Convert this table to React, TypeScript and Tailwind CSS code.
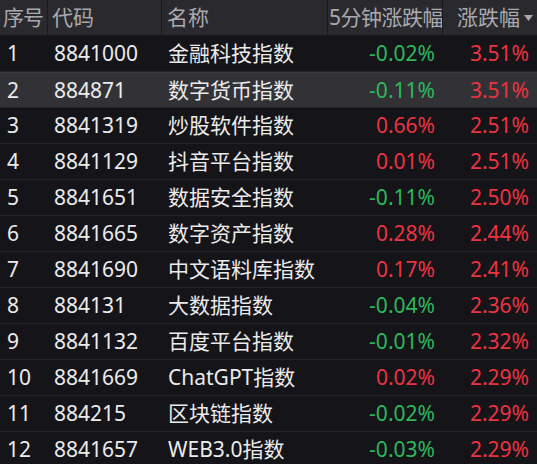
const rows = [
  ["1", "8841000", "金融科技指数", "-0.02%", "3.51%"],
  ["2", "884871", "数字货币指数", "-0.11%", "3.51%"],
  ["3", "8841319", "炒股软件指数", "0.66%", "2.51%"],
  ["4", "8841129", "抖音平台指数", "0.01%", "2.51%"],
  ["5", "8841651", "数据安全指数", "-0.11%", "2.50%"],
  ["6", "8841665", "数字资产指数", "0.28%", "2.44%"],
  ["7", "8841690", "中文语料库指数", "0.17%", "2.41%"],
  ["8", "884131", "大数据指数", "-0.04%", "2.36%"],
  ["9", "8841132", "百度平台指数", "-0.01%", "2.32%"],
  ["10", "8841669", "ChatGPT指数", "0.02%", "2.29%"],
  ["11", "884215", "区块链指数", "-0.02%", "2.29%"],
  ["12", "8841657", "WEB3.0指数", "-0.03%", "2.29%"],
];

export default function App() {
  return (
    <div
      className="w-[537px] h-[464px] overflow-hidden bg-[#141419] text-[21px] leading-none whitespace-nowrap"
      style={{ fontFamily: '"Noto Sans", "Noto Sans CJK SC", sans-serif' }}
    >
      {/* Header */}
      <div className="flex h-[36px] bg-[#2a2a2e] text-[#a9a9ad] border-b border-[#1a1a1e]">
        <div className="w-[48px] flex items-center pl-[3px] border-r border-[#1a1a1e] tracking-[-1px] overflow-hidden">序号</div>
        <div className="w-[114px] flex items-center pl-[4px] border-r border-[#1a1a1e]">代码</div>
        <div className="w-[166px] flex items-center pl-[5px] border-r border-[#1a1a1e]">名称</div>
        <div className="w-[115px] flex items-center pl-[1px] border-r border-[#1a1a1e] tracking-[-0.5px] overflow-hidden">5分钟涨跌幅</div>
        <div className="flex-1 flex items-center justify-end pr-[4px] gap-[4px]">
          涨跌幅
          <svg width="9" height="6" viewBox="0 0 9 6">
            <path d="M0 0 L9 0 L4.5 6 Z" fill="#a9a9ad" />
          </svg>
        </div>
      </div>

      {/* Rows */}
      {rows.map(([no, code, name, min5, pct]) => {
        const up = !min5.startsWith("-");
        return (
          <div
            key={no}
            className={`flex h-[36px] items-center border-b border-[#24262b] ${
              no === "2" ? "bg-[#323236] border-t border-t-[#3c3c41]" : ""
            }`}
          >
            <div className="w-[48px] pl-[7px] text-[#ebebeb]">{no}</div>
            <div className="w-[114px] pl-[6px] text-[#ebebeb]">{code}</div>
            <div className="w-[166px] pl-[6px] text-[#ebebeb]">{name}</div>
            <div className={`w-[115px] text-right pr-[8px] ${up ? "text-[#ec3340]" : "text-[#2db85c]"}`}>{min5}</div>
            <div className="flex-1 text-right pr-[8px] text-[#ec3340]">{pct}</div>
          </div>
        );
      })}
    </div>
  );
}
